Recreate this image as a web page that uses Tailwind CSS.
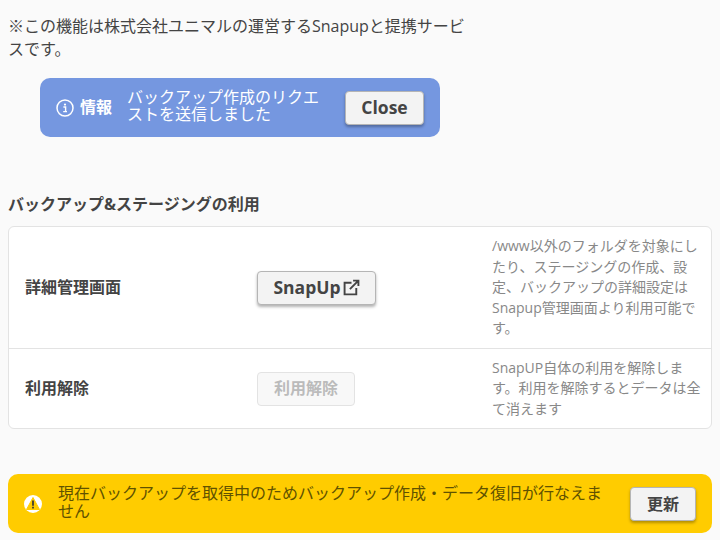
<!DOCTYPE html>
<html lang="ja">
<head>
  <meta charset="UTF-8" />
  <script src="https://cdn.jsdelivr.net/npm/@tailwindcss/browser@4"></script>
  <title>バックアップ</title>
</head>
<body class="bg-[#fafafa] text-[#444] h-[540px] overflow-hidden font-['Open_Sans','Noto_Sans_CJK_JP',sans-serif]">
  <div class="px-2 pt-[15px]">
    <p class="w-[464px] text-[16px] leading-[23px]">※この機能は株式会社ユニマルの運営するSnapupと提携サービスです。</p>

    <!-- info message -->
    <div class="ml-8 mt-[17px] w-[400px] h-[59px] rounded-[10px] bg-[#7597e0] text-white flex items-center pl-4 pr-4">
      <svg class="w-[18px] h-[18px] shrink-0" viewBox="0 0 18 18" fill="none" stroke="white">
        <circle cx="9" cy="9" r="8" stroke-width="1.5" />
        <circle cx="9" cy="5.6" r="1.1" fill="white" stroke="none" />
        <path d="M7.4 8h2.2v4.4M7.2 12.6h3.8" stroke-width="1.4" />
      </svg>
      <span class="ml-[6px] w-[47px] shrink-0 text-[16px] font-bold mb-[2px]">情報</span>
      <span class="w-[206px] shrink-0 text-[16px] leading-[17px] mb-[3px]">バックアップ作成のリクエストを送信しました</span>
      <button class="ml-3 w-[79px] h-[34px] shrink-0 rounded-[4px] bg-[#f3f3f3] border border-[#b5b5b5] shadow-[0_2px_3px_rgba(0,0,0,0.3)] text-[#444] text-[17.5px] font-bold">Close</button>
    </div>

    <h2 class="mt-[57px] text-[16px] leading-5 font-bold">バックアップ&amp;ステージングの利用</h2>

    <!-- settings table -->
    <div class="mt-3 w-[704px] rounded-[6px] border border-[#e3e3e3] bg-white">
      <div class="flex items-center h-[122px] border-b border-[#e3e3e3]">
        <div class="w-[232px] pl-4 text-[16px] font-bold shrink-0 mb-[2px]">詳細管理画面</div>
        <div class="w-[251px] shrink-0 pl-[16px]">
          <button class="w-[119px] h-[34px] rounded-[4px] bg-[#f3f3f3] border border-[#b5b5b5] shadow-[0_2px_3px_rgba(0,0,0,0.3)] text-[17.5px] font-bold flex items-center justify-center gap-[2px]">
            SnapUp
            <svg class="w-[17px] h-[17px]" viewBox="0 0 16 16" fill="none" stroke="#444" stroke-width="1.8">
              <path d="M8 3.5H1.5v11h11V8.5" />
              <path d="M6.5 9.5L14 2M9.5 1.5h5v5" />
            </svg>
          </button>
        </div>
        <p class="w-[212px] shrink-0 text-[14px] leading-[20.5px] text-[#888]">/www以外のフォルダを対象にしたり、ステージングの作成、設定、バックアップの詳細設定はSnapup管理画面より利用可能です。</p>
      </div>
      <div class="flex items-center h-[79px]">
        <div class="w-[232px] pl-4 text-[16px] font-bold shrink-0 mb-[2px]">利用解除</div>
        <div class="w-[251px] shrink-0 pl-[16px]">
          <button class="w-[98px] h-[34px] pb-[2px] rounded-[4px] bg-[#f8f8f8] border border-[#e3e3e3] text-[#bbb] text-[16px] font-bold">利用解除</button>
        </div>
        <p class="w-[212px] shrink-0 text-[14px] leading-[20.5px] text-[#888]">SnapUP自体の利用を解除します。利用を解除するとデータは全て消えます</p>
      </div>
    </div>

    <!-- warning message -->
    <div class="mt-[45px] w-[704px] h-[59px] rounded-[10px] bg-[#ffcc00] flex items-center pl-4 pr-4">
      <svg class="w-[18px] h-[18px] shrink-0" viewBox="0 0 18 18">
        <circle cx="9" cy="9" r="9" fill="white" />
        <path d="M9 2.5L15.5 14.5H2.5Z" fill="#ffcc00" stroke="#ffcc00" stroke-linejoin="round" />
        <path d="M9 5.6V10.8M9 11.8V13.6" stroke="#333" stroke-width="1.7" />
      </svg>
      <p class="ml-4 w-[552px] shrink-0 text-[16px] leading-[18px] text-[#5f5200] mb-[3px]">現在バックアップを取得中のためバックアップ作成・データ復旧が行なえません</p>
      <button class="ml-auto w-[66px] h-[34px] shrink-0 rounded-[4px] bg-[#f3f3f3] border border-[#b5b5b5] shadow-[0_2px_3px_rgba(0,0,0,0.3)] text-[#444] text-[16px] font-bold">更新</button>
    </div>
  </div>
</body>
</html>
